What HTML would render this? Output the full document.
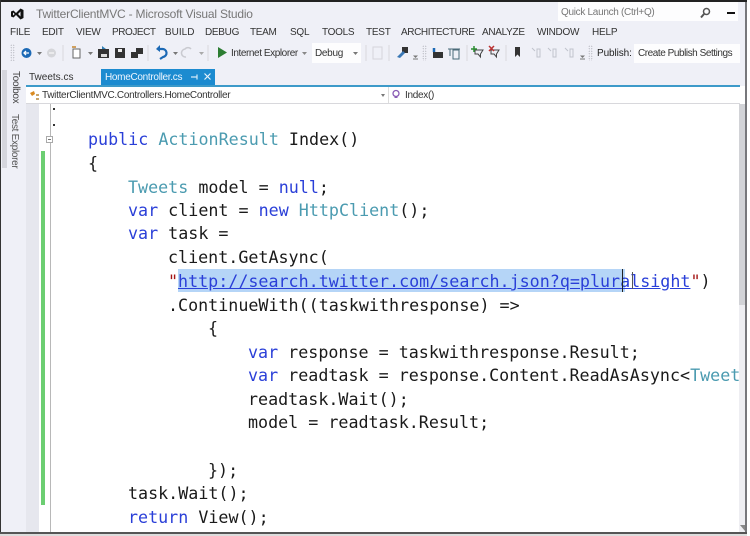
<!DOCTYPE html>
<html><head><meta charset="utf-8"><style>
html,body{margin:0;padding:0;background:#fff}
#p{position:relative;width:750px;height:536px;overflow:hidden;background:#fff;font-family:"Liberation Sans",sans-serif;filter:blur(.35px)}
#p div,#p span.a,#p svg{position:absolute}
.m{font-size:10px;color:#333;top:27px;white-space:nowrap;letter-spacing:-.25px}
.t{font-size:10px;color:#333;white-space:nowrap;letter-spacing:-.3px}
.c{font-family:"DejaVu Sans Mono","Liberation Mono",monospace;font-size:16.7px;color:#1a1a1a;white-space:pre;line-height:20px;letter-spacing:0}
.k{color:#2a3fd8}.y{color:#4b9bb0}.u{color:#2a3fd8;text-decoration:underline}.s{color:#a31515}
.dd{width:0;height:0;border-left:2.5px solid transparent;border-right:2.5px solid transparent;border-top:3px solid #777}
.g{width:5px;background-image:radial-gradient(#b9bac2 35%,transparent 40%);background-size:2.5px 2.5px}
</style></head><body><div id="p">
<div style="left:0;top:0;width:750px;height:86px;background:#eff0f7"></div>
<div style="left:0;top:70px;width:26px;height:466px;background:#eff0f7"></div>
<div style="left:26px;top:104px;width:13px;height:432px;background:#e6e7ee"></div>
<div style="left:2px;top:70px;width:5px;height:98px;background:#d5d6dd"></div>

<svg style="left:10px;top:7px" width="14" height="14" viewBox="0 0 14 14"><path d="M1 4.500L3.500 3.500L6 6L10.500 1.500L13.500 3V11L10.500 12.500L6 8L3.500 10.500L1 9.500ZM3 5.500V8.500L4.700 7ZM10.500 4.500L8 7L10.500 9.500Z" fill="#111" fill-rule="evenodd"/></svg>
<div class="t" style="left:36px;top:7px;font-size:12px;color:#777;letter-spacing:-.2px">TwitterClientMVC - Microsoft Visual Studio</div>
<div style="left:558px;top:2px;width:180px;height:19px;background:#fdfdfe"></div>
<div class="t" style="left:561px;top:7px;color:#777">Quick Launch (Ctrl+Q)</div>
<svg style="left:699px;top:7px" width="12" height="12" viewBox="0 0 12 12"><circle cx="7.500" cy="4.500" r="3" fill="none" stroke="#555" stroke-width="1.500"/><path d="M5 7L2 10.500" stroke="#555" stroke-width="2"/></svg>
<div style="left:727px;top:12px;width:8px;height:2px;background:#111"></div>

<div class="m" style="left:10px">FILE</div>
<div class="m" style="left:42px">EDIT</div>
<div class="m" style="left:76px">VIEW</div>
<div class="m" style="left:112px;letter-spacing:-.45px">PROJECT</div>
<div class="m" style="left:165px;letter-spacing:0">BUILD</div>
<div class="m" style="left:205px;letter-spacing:-.3px">DEBUG</div>
<div class="m" style="left:250px;letter-spacing:-.3px">TEAM</div>
<div class="m" style="left:290px">SQL</div>
<div class="m" style="left:322px;letter-spacing:-.3px">TOOLS</div>
<div class="m" style="left:366px">TEST</div>
<div class="m" style="left:401px;letter-spacing:-.4px">ARCHITECTURE</div>
<div class="m" style="left:482px;letter-spacing:-.3px">ANALYZE</div>
<div class="m" style="left:537px;letter-spacing:-.3px">WINDOW</div>
<div class="m" style="left:592px;letter-spacing:-.2px">HELP</div>

<div class="g" style="left:10px;top:44px;height:18px"></div>
<div class="g" style="left:422px;top:45px;height:16px"></div>
<div class="g" style="left:588px;top:45px;height:16px"></div>
<svg style="left:0;top:40px" width="750" height="26" viewBox="0 0 750 26">
<circle cx="26.500" cy="13" r="5" fill="#1c69b5"/><path d="M24 13h5M26 11l-2 2 2 2" stroke="#fff" stroke-width="1.300" fill="none"/>
<path d="M37 12h5l-2.500 3z" fill="#777"/>
<circle cx="51.500" cy="13" r="4.500" fill="#d5d6da"/><path d="M49 13h5" stroke="#fff"/>
<path d="M63 5v16" stroke="#d8d8de"/>
<rect x="73" y="9" width="7" height="9" fill="#fff" stroke="#666"/><path d="M72 7h4" stroke="#d0a060" stroke-width="2"/>
<path d="M88 12h5l-2.500 3z" fill="#777"/>
<rect x="98" y="9" width="11" height="9" fill="#333"/><path d="M102 6l4 3h-4z" fill="#2f7fb5"/><rect x="101" y="14" width="6" height="3" fill="#ddd"/>
<rect x="115" y="8" width="10" height="10" fill="#333"/><rect x="118" y="9" width="4" height="3" fill="#eee"/>
<rect x="131" y="12" width="7" height="6" fill="#333"/><rect x="136" y="8" width="7" height="6" fill="#333"/>
<path d="M148 5v16" stroke="#d8d8de"/>
<path d="M158 9h4a4 4 0 0 1 1 8l-3 2" stroke="#1c69b5" stroke-width="2.200" fill="none"/><path d="M160 5v7l-4-3z" fill="#1c69b5"/>
<path d="M173 12h5l-2.500 3z" fill="#777"/>
<path d="M191 9a4 4 0 0 0-6 0 4 4 0 0 0 1 8" stroke="#c9cad0" stroke-width="1.500" fill="none"/>
<path d="M199 12h5l-2.500 3z" fill="#aaa"/>
<path d="M208 5v16" stroke="#d8d8de"/>
<path d="M218 7v11l9-5.500z" fill="#2c7d32"/>
<path d="M302 12h5l-2.500 3z" fill="#888"/>
<rect x="312" y="3" width="49" height="20" fill="#fdfdfe"/>
<path d="M353 12h5l-2.500 3z" fill="#777"/>
<path d="M366 5v16" stroke="#d8d8de"/>
<rect x="373" y="7" width="9" height="12" fill="none" stroke="#d5d5db"/>
<path d="M389 5v16" stroke="#d8d8de"/>
<rect x="402" y="7" width="6" height="6" fill="#333"/><path d="M397 17l6-6 2 2-5 5z" fill="#3b78b5"/>
<path d="M413 15.500h5l-2.500 2.500z" fill="#777"/><path d="M413 19h5" stroke="#777"/>
<rect x="433" y="12" width="10" height="6" fill="#333"/><path d="M434 8v4" stroke="#1c69b5" stroke-width="2.500"/>
<path d="M448 9h12M450 9v7M453 10h6v9h-6z" stroke="#4a6a78" fill="none"/>
<path d="M467 5v16" stroke="#d8d8de"/>
<path d="M475 10h8l-2.500 4v3l-2.500-3h-3z" fill="none" stroke="#444"/><path d="M474 6v6M471 9h6" stroke="#2c8d32" stroke-width="1.500"/>
<path d="M491 10h8l-2.500 4v3l-2.500-3h-3z" fill="none" stroke="#444"/><path d="M489 6l5 5M494 6l-5 5" stroke="#b33" stroke-width="1.500"/>
<path d="M506 5v16" stroke="#d8d8de"/>
<path d="M515 7h5v10l-2.500-2.500-2.500 2.500z" fill="#333"/>
<path d="M532 8l3 3M537 9h3v8h-3zM548 8l3 3M553 9h3v8h-3zM565 8l3 3M570 9h3v8h-3z" fill="none" stroke="#c0c3cc"/>
<path d="M580 15.500h5l-2.500 2.500z" fill="#777"/><path d="M580 19h5" stroke="#777"/>
</svg>
<div class="t" style="left:231px;top:48px;letter-spacing:-.42px">Internet Explorer</div>
<div class="t" style="left:315px;top:48px">Debug</div>
<div class="t" style="left:597px;top:48px;color:#222;letter-spacing:-.1px">Publish:</div>
<div style="left:634px;top:44px;width:106px;height:19px;background:#fdfdfe"></div>
<div class="t" style="left:638px;top:48px;letter-spacing:-.45px">Create Publish Settings</div>

<div class="t" style="left:29px;top:72px;color:#333;letter-spacing:0">Tweets.cs</div>
<div style="left:101px;top:69px;width:114px;height:17px;background:#1c8bd0"></div>
<div class="t" style="left:105px;top:72px;color:#eef6ff">HomeController.cs</div>
<svg style="left:190px;top:72px" width="10" height="10" viewBox="0 0 10 10"><path d="M2 5h5M7 2.500v5M1 5h1" stroke="#d6eaf8" stroke-width="1.200"/></svg>
<svg style="left:203px;top:72px" width="10" height="10" viewBox="0 0 10 10"><path d="M1.500 1.500l6 6M7.500 1.500l-6 6" stroke="#e8f3fb" stroke-width="1.200"/></svg>
<div style="left:26px;top:85px;width:714px;height:2px;background:#3d9ac9"></div>
<div style="left:26px;top:87px;width:714px;height:16px;background:#fff"></div>
<div style="left:26px;top:103px;width:714px;height:1px;background:#d8d8dc"></div>
<svg style="left:29px;top:89px" width="12" height="12" viewBox="0 0 12 12"><path d="M1 4l4-2 1 3-3 2z" fill="#d98a20"/><path d="M7 5h3v2H7zM7 9h3v2H7z" fill="#c9a56a"/></svg>
<div class="t" style="left:42px;top:90px;color:#333">TwitterClientMVC.Controllers.HomeController</div>
<div class="dd" style="left:381px;top:94px"></div>
<div style="left:388px;top:87px;width:1px;height:16px;background:#ddd"></div>
<svg style="left:391px;top:89px" width="10" height="10" viewBox="0 0 10 10"><circle cx="5" cy="4.500" r="3" fill="none" stroke="#8a5cb5" stroke-width="1.300"/><path d="M3.500 8.500h3" stroke="#8a5cb5"/></svg>
<div class="t" style="left:405px;top:90px;color:#333">Index()</div>

<div class="t" style="left:10px;top:71px;writing-mode:vertical-rl;color:#444;line-height:10px;height:34px">Toolbox</div>
<div class="t" style="left:9px;top:114px;writing-mode:vertical-rl;color:#555;line-height:10px">Test Explorer</div>

<div style="left:50px;top:104px;width:1px;height:432px;background:#b8b8b8"></div>
<div style="left:41px;top:151px;width:4px;height:354px;background:#6cce72"></div>
<div style="left:46px;top:136px;width:7px;height:7px;border:1px solid #aaa;background:#fff;box-sizing:border-box"></div>
<div style="left:48px;top:139px;width:3px;height:1px;background:#777"></div>
<div style="left:53px;top:108px;width:2px;height:2px;background:#333"></div>
<div style="left:53px;top:124px;width:2px;height:2px;background:#333"></div>

<div style="left:178px;top:269px;width:447px;height:23px;background:#b5d5f7"></div>

<div class="c" style="left:88px;top:129px"><span class="k">public</span> <span class="y">ActionResult</span> Index()</div>
<div class="c" style="left:88px;top:153px">{</div>
<div class="c" style="left:128px;top:177px"><span class="y">Tweets</span> model = <span class="k">null</span>;</div>
<div class="c" style="left:128px;top:200px"><span class="k">var</span> client = <span class="k">new</span> <span class="y">HttpClient</span>();</div>
<div class="c" style="left:128px;top:223px"><span class="k">var</span> task =</div>
<div class="c" style="left:168px;top:247px">client.GetAsync(</div>
<div class="c" style="left:168px;top:271px"><span class="s">"</span><span class="u">http://search.twitter.com/search.json?q=pluralsight</span><span class="s">"</span>)</div>
<div class="c" style="left:168px;top:295px">.ContinueWith((taskwithresponse) =&gt;</div>
<div class="c" style="left:208px;top:318px">{</div>
<div class="c" style="left:248px;top:342px"><span class="k">var</span> response = taskwithresponse.Result;</div>
<div class="c" style="left:248px;top:365px"><span class="k">var</span> readtask = response.Content.ReadAsAsync&lt;<span class="y">Tweet</span></div>
<div class="c" style="left:248px;top:389px">readtask.Wait();</div>
<div class="c" style="left:248px;top:412px">model = readtask.Result;</div>
<div class="c" style="left:208px;top:460px">});</div>
<div class="c" style="left:128px;top:483px">task.Wait();</div>
<div class="c" style="left:128px;top:507px"><span class="k">return</span> View();</div>

<div style="left:622px;top:269px;width:1px;height:23px;background:#222"></div>
<div style="left:632px;top:272px;width:1px;height:17px;background:#555"></div>

<div style="left:739px;top:104px;width:6px;height:430px;background:#eeeef2"></div>
<div style="left:739px;top:104px;width:6px;height:201px;background:#d2d3d7"></div>
<svg style="left:740px;top:524px" width="6" height="8" viewBox="0 0 6 8"><path d="M0 1h5v6z" fill="#888"/></svg>
<div style="left:745px;top:0;width:2px;height:534px;background:#77777b"></div>
<div style="left:747px;top:0;width:3px;height:536px;background:#fff"></div>
<div style="left:0;top:0;width:747px;height:2px;background:#222"></div>
<div style="left:0;top:0;width:1px;height:536px;background:#333"></div>
<div style="left:0;top:532px;width:747px;height:2px;background:#555"></div>
<div style="left:0;top:534px;width:747px;height:2px;background:#ddd"></div>
</div></body></html>
